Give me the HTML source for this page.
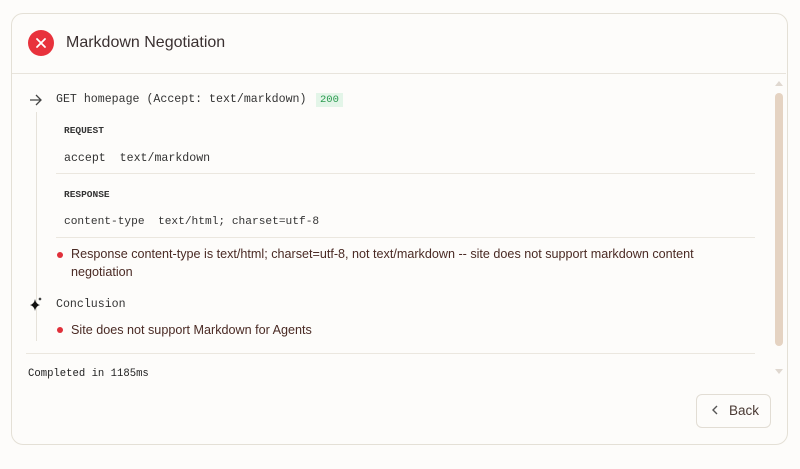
<!DOCTYPE html>
<html><head><style>
body{margin:0;width:800px;height:469px;background:#fdfcfa;font-family:"Liberation Sans",sans-serif;position:relative;overflow:hidden}
.a{position:absolute;white-space:nowrap}
.card{position:absolute;left:11px;top:13px;width:775px;height:430px;border:1px solid #e4e0d6;border-radius:12px;background:#fdfcfa}
.m{font-family:"Liberation Mono",monospace;color:#333}
.hr{position:absolute;height:1px;background:#ebe7df}
.dot{position:absolute;width:6px;height:6px;border-radius:50%;background:#e0303a}
.t{font-size:12.6px;color:#4a2a24}
</style></head><body>
<div class="card"></div>
<div class="a" style="left:28px;top:30px;width:26px;height:26px;border-radius:50%;background:#e8323c"></div>
<svg class="a" style="left:28px;top:30px" width="26" height="26"><path d="M9 9L17 17M17 9L9 17" stroke="#fff" stroke-width="1.8" stroke-linecap="round"/></svg>
<div class="a" style="left:66px;top:34px;font-size:16px;color:#3a3030">Markdown Negotiation</div>
<div class="hr" style="left:12px;top:73px;width:774px;background:#e8e4dc"></div>
<svg class="a" style="left:29px;top:94px" width="14" height="12"><path d="M1 6H12M7 1L12 6L7 11" stroke="#444" stroke-width="1.3" fill="none"/></svg>
<div class="a m" style="left:56px;top:93px;font-size:11.6px">GET homepage (Accept: text/markdown)</div>
<div class="a m" style="left:316px;top:93px;font-size:10.5px;color:#2a9a4e;background:#e3f5e8;padding:1px 4px">200</div>
<div class="a" style="left:36px;top:112px;width:1px;height:229px;background:#e6e2da"></div>
<div class="a m" style="left:64px;top:125px;font-size:9.5px;font-weight:bold">REQUEST</div>
<div class="a m" style="left:64px;top:152px;font-size:11.6px">accept&nbsp;&nbsp;text/markdown</div>
<div class="hr" style="left:56px;top:173px;width:699px"></div>
<div class="a m" style="left:64px;top:189px;font-size:9.5px;font-weight:bold">RESPONSE</div>
<div class="a m" style="left:64px;top:216px;font-size:11.2px">content-type&nbsp;&nbsp;text/html; charset=utf-8</div>
<div class="hr" style="left:56px;top:237px;width:699px"></div>
<div class="dot" style="left:57px;top:252px"></div>
<div class="a t" style="left:71px;top:247px">Response content-type is text/html; charset=utf-8, not text/markdown -- site does not support markdown content</div>
<div class="a t" style="left:71px;top:265px">negotiation</div>
<svg class="a" style="left:28px;top:296px" width="16" height="16"><path d="M7 3Q7.8 8 12 9Q7.8 10 7 15Q6.2 10 2 9Q6.2 8 7 3Z" fill="#111"/><path d="M12 1Q12.3 2.7 14 3Q12.3 3.3 12 5Q11.7 3.3 10 3Q11.7 2.7 12 1Z" fill="#111"/></svg>
<div class="a m" style="left:56px;top:298px;font-size:11.6px">Conclusion</div>
<div class="dot" style="left:57px;top:327px"></div>
<div class="a t" style="left:71px;top:323px">Site does not support Markdown for Agents</div>
<div class="hr" style="left:26px;top:353px;width:729px"></div>
<div class="a m" style="left:28px;top:368px;font-size:10.6px;color:#222">Completed in 1185ms</div>
<svg class="a" style="left:775px;top:80px" width="8" height="6"><path d="M0 6L4 1L8 6Z" fill="#e0d8d0"/></svg>
<div class="a" style="left:775px;top:93px;width:8px;height:253px;border-radius:4px;background:#e5d3c2"></div>
<svg class="a" style="left:775px;top:369px" width="8" height="6"><path d="M0 0L4 5L8 0Z" fill="#e0d8d0"/></svg>
<div class="a" style="left:696px;top:394px;width:73px;height:32px;border:1px solid #e2ddd4;border-radius:6px;background:#fdfcfa"></div>
<svg class="a" style="left:711px;top:405px" width="8" height="10"><path d="M6 1L2 5L6 9" stroke="#555" stroke-width="1.4" fill="none"/></svg>
<div class="a" style="left:729px;top:403px;font-size:13.5px;color:#4a3a34">Back</div>
</body></html>
